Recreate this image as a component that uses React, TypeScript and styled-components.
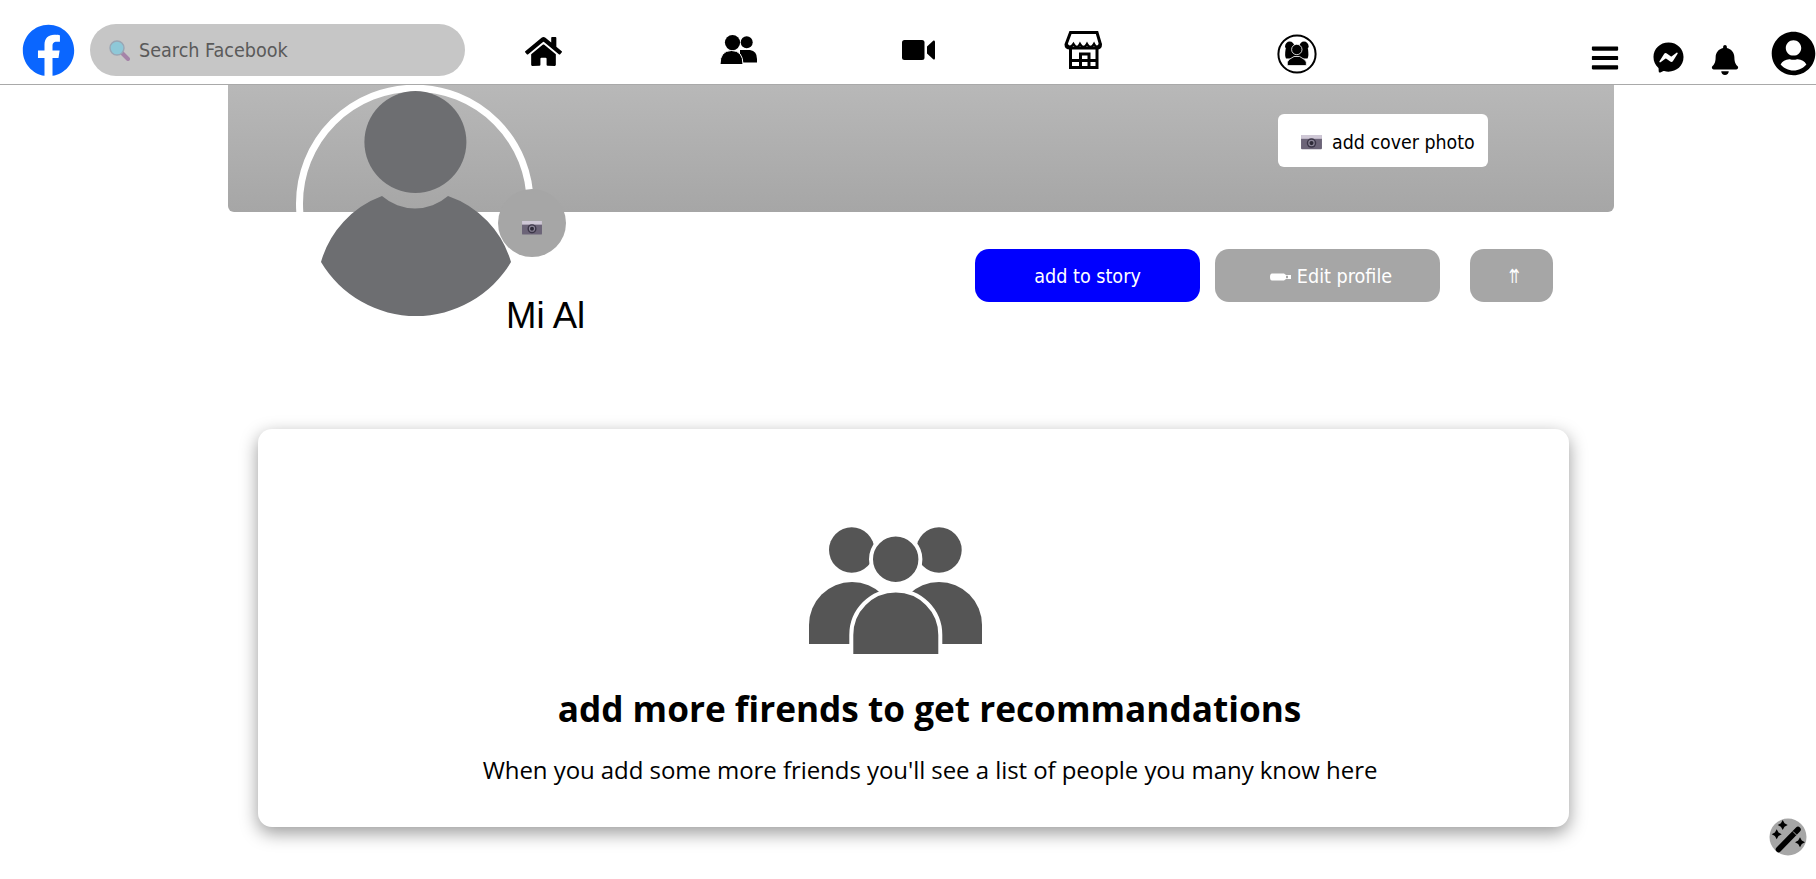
import React from 'react';
import styled, {createGlobalStyle} from 'styled-components';
import {FaBars, FaBell, FaFacebook, FaFacebookMessenger, FaHome, FaUserCircle} from 'react-icons/fa';

const GlobalStyle = createGlobalStyle`
    html, body {
        margin: 0;
        padding: 0;
        background: #fff;
    }
    body {
        font-family: "Open Sans", sans-serif;
        color: #000;
    }
`;

const uiFont = `"DejaVu Sans Condensed", "DejaVu Sans", sans-serif`;

const CameraGlyph = ({width}: {width: number}) => (
    <svg width={width} height={width * 0.68} viewBox="0 0 22 15">
        <rect x="0" y="0" width="22" height="15" rx="1" fill="#6c6478"/>
        <rect x="0" y="0" width="22" height="4" fill="#cfc8d6"/>
        <circle cx="11" cy="8.5" r="5" fill="#3c3648"/>
        <circle cx="11" cy="8.5" r="3.4" fill="#8d8799"/>
        <circle cx="11" cy="8.5" r="2.2" fill="#2e2a38"/>
    </svg>
);

const SearchGlyph = () => (
    <svg width="21" height="21" viewBox="0 0 21 21">
        <path d="M13 13 L19 19" stroke="#a583a8" strokeWidth="4" strokeLinecap="round"/>
        <circle cx="8" cy="8" r="7" fill="#8ec8d8" stroke="#9aa6b4" strokeWidth="1.4"/>
    </svg>
);

const PencilGlyph = () => (
    <svg width="21" height="8" viewBox="0 0 21 8">
        <path d="M2 0.5 H14 L16 2 H21 V6 H16 L14 7.5 H2 Q0 7.5 0 4 Q0 0.5 2 0.5 Z" fill="#fff"/>
        <rect x="16" y="2.8" width="2" height="2.4" fill="#a6a6a6"/>
    </svg>
);

const FriendsIcon = () => (
    <svg width="37" height="30" viewBox="0 0 37 30">
        <circle cx="26.7" cy="7.3" r="6"/>
        <path d="M20 27.5 V15 H30 Q37 16 37 24 V27.5 Z"/>
        <circle cx="12.5" cy="7.6" r="7.6"/>
        <path d="M0 29.5 Q0 15.5 11.5 15.5 Q23 15.5 23 29.5 Z" stroke="#fff" strokeWidth="1"/>
    </svg>
);

const VideoIcon = () => (
    <svg width="33" height="20" viewBox="0 0 33 20">
        <rect x="0" y="0" width="22.5" height="20" rx="2.5"/>
        <path d="M25 6.5 L31.5 0.6 Q33 0 33 2 V18 Q33 20 31.5 19.4 L25 13.5 Z"/>
    </svg>
);

const StoreIcon = () => (
    <svg width="38" height="38" viewBox="0 0 38 38" fill="none" stroke="#000" strokeWidth="3">
        <path d="M6.5 1.5 H33 L36.5 13.5 Q36.5 17 33 17 H6 Q2 17 2 13.5 Z"/>
        <path d="M2 12 Q5.5 19 9.5 13 Q13 19 16 13 Q19.5 19 23 13 Q26.5 19 30 13 Q33 19 36.5 12" strokeWidth="2.4"/>
        <path d="M6.5 17 V36.5 H33 V17"/>
        <path d="M6.5 29.5 H33"/>
        <path d="M16.5 36.5 V23 H25 V36.5"/>
    </svg>
);

const GroupCircleIcon = () => (
    <svg width="40" height="40" viewBox="0 0 40 40">
        <circle cx="20" cy="20" r="18.6" fill="#fff" stroke="#000" strokeWidth="2"/>
        <circle cx="12.7" cy="12.2" r="4.6"/>
        <circle cx="27" cy="12.2" r="4.6"/>
        <path d="M8.6 15 Q7.5 22 9 24.5 L30.5 24.5 Q32 22 31 15 Z"/>
        <circle cx="19.8" cy="15.5" r="5.2" stroke="#fff" strokeWidth="0.8"/>
        <path d="M10.3 31.6 V28 Q11 25.5 17 22.5 H22.6 Q28.6 25.5 29.3 28 V31.6 Z" stroke="#fff" strokeWidth="0.8"/>
    </svg>
);

const WandIcon = () => (
    <svg width="38" height="38" viewBox="0 0 38 38">
        <circle cx="19" cy="19" r="18.5" fill="#a6a6a6"/>
        <path d="M9.5 31.5 L29 11.5" stroke="#000" strokeWidth="5.5" strokeLinecap="round"/>
        <path d="M24 13.5 L27.5 17" stroke="#a6a6a6" strokeWidth="1"/>
        <path d="M13.7 2 L15.5 5.2 L18.7 7 L15.5 8.8 L13.7 12 L11.9 8.8 L8.7 7 L11.9 5.2 Z"/>
        <path d="M7.7 11.3 L9.5 14.5 L12.7 16.3 L9.5 18.1 L7.7 21.3 L5.9 18.1 L2.7 16.3 L5.9 14.5 Z"/>
        <path d="M31 19.3 L32.8 22.5 L36 24.3 L32.8 26.1 L31 29.3 L29.2 26.1 L26 24.3 L29.2 22.5 Z"/>
    </svg>
);

const PeopleIcon = () => (
    <svg width="173" height="127" viewBox="0 0 173 127" fill="#555">
        <circle cx="42.7" cy="23" r="22.7"/>
        <circle cx="130" cy="23" r="22.7"/>
        <path d="M0 117 V98 A43 43 0 0 1 86 98 V117 Z"/>
        <path d="M87 117 V98 A43 43 0 0 1 173 98 V117 Z"/>
        <circle cx="86.7" cy="32.3" r="24.7" stroke="#fff" strokeWidth="4"/>
        <path d="M42.3 129 V108 A44.5 44.5 0 0 1 131.3 108 V129 Z" stroke="#fff" strokeWidth="4"/>
    </svg>
);

const AvatarArt = () => (
    <svg width="240" height="235" viewBox="0 0 240 235">
        <defs>
            <clipPath id="coverClip">
                <rect x="0" y="0" width="240" height="127"/>
            </clipPath>
        </defs>
        <circle cx="118.8" cy="118.5" r="115.3" fill="none" stroke="#fff" strokeWidth="7" clipPath="url(#coverClip)"/>
        <circle cx="119.4" cy="57" r="51" fill="#6d6e71"/>
        <path d="M86 111 A50 50 0 0 0 152 111 A99 99 0 0 1 215 177 A110.5 110.5 0 0 1 25 177 A99 99 0 0 1 86 111 Z" fill="#6d6e71"/>
    </svg>
);

export default function App() {
    return (
        <Page>
            <GlobalStyle/>
            <Header>
                <Slot $left={0} $top={0}><FaFacebook size={53} color="#0a66ff"/></Slot>
                <Search>
                    <SearchGlyph/>
                    <span>Search Facebook</span>
                </Search>
                <Slot $left={60} $top={9}><FaHome size={37}/></Slot>
                <Slot $left={158} $top={11}><FriendsIcon/></Slot>
                <Slot $left={145} $top={16}><VideoIcon/></Slot>
                <Slot $left={129} $top={7}><StoreIcon/></Slot>
                <Slot $left={175} $top={10}><GroupCircleIcon/></Slot>
                <Slot $left={273} $top={19}><FaBars size={30}/></Slot>
                <Slot $left={33} $top={18}><FaFacebookMessenger size={31}/></Slot>
                <Slot $left={26} $top={21}><FaBell size={30}/></Slot>
                <Slot $left={31} $top={7}><FaUserCircle size={45}/></Slot>
            </Header>

            <Profile>
                <Cover>
                    <CoverButton>
                        <CameraGlyph width={21}/>
                        <span>add cover photo</span>
                    </CoverButton>
                </Cover>
                <AvatarHolder><AvatarArt/></AvatarHolder>
                <AvatarCamera><CameraGlyph width={20}/></AvatarCamera>
                <ProfileRow>
                    <Name>Mi Al</Name>
                    <Actions>
                        <ActionButton $bg="#0000ff" $width={225}>add to story</ActionButton>
                        <ActionButton $bg="#a6a6a6" $width={225} $shift={7}><PencilGlyph/> Edit profile</ActionButton>
                        <ActionButton $bg="#a6a6a6" $width={83} $gap={30} $shift={6}><ShareArrows>⇈</ShareArrows></ActionButton>
                    </Actions>
                </ProfileRow>
            </Profile>

            <Card>
                <CardIcon><PeopleIcon/></CardIcon>
                <CardTitle>add more firends to get recommandations</CardTitle>
                <CardText>When you add some more friends you'll see a list of people you many know here</CardText>
            </Card>

            <FloatingWand><WandIcon/></FloatingWand>
        </Page>
    );
}

const Page = styled.div`
    box-sizing: border-box;
    height: 879px;
    overflow: hidden;
`;

const Header = styled.header`
    display: flex;
    align-items: flex-start;
    box-sizing: border-box;
    height: 85px;
    padding: 24px 0 0 22px;
    border-bottom: 1px solid #a9a9a9;
    background: #fff;
`;

const Slot = styled.div<{$left: number; $top: number}>`
    display: flex;
    flex: none;
    margin-left: ${p => p.$left}px;
    margin-top: ${p => p.$top}px;
`;

const Search = styled.div`
    display: flex;
    align-items: center;
    gap: 9px;
    box-sizing: border-box;
    width: 375px;
    height: 52px;
    margin-left: 15px;
    padding-left: 19px;
    border-radius: 26px;
    background: #c6c6c6;
    font-family: ${uiFont};
    font-size: 19.6px;
    color: #5a5a5a;
`;

const Profile = styled.section`
    position: relative;
    width: 1386px;
    margin-left: 228px;
`;

const Cover = styled.div`
    display: flex;
    justify-content: flex-end;
    align-items: flex-start;
    box-sizing: border-box;
    height: 127px;
    padding: 29px 126px 0 0;
    border-radius: 0 0 6px 6px;
    background: linear-gradient(#b8b8b8, #a6a6a6);
`;

const CoverButton = styled.button`
    display: flex;
    align-items: center;
    gap: 10px;
    box-sizing: border-box;
    width: 210px;
    height: 53px;
    padding: 4px 0 0 23px;
    border: none;
    border-radius: 6px;
    background: #fff;
    font-family: ${uiFont};
    font-size: 19.4px;
    color: #000;
`;

const AvatarHolder = styled.div`
    position: absolute;
    left: 68px;
    top: 0;
    display: flex;
`;

const AvatarCamera = styled.div`
    position: absolute;
    left: 270px;
    top: 104px;
    display: flex;
    align-items: center;
    justify-content: center;
    box-sizing: border-box;
    width: 68px;
    height: 68px;
    padding-top: 10px;
    border-radius: 50%;
    background: #a6a6a6;
`;

const ProfileRow = styled.div`
    display: flex;
    align-items: flex-start;
    padding: 37px 61px 0 278px;
`;

const Name = styled.h1`
    margin: 46px 0 0;
    font-family: "Liberation Sans", Arial, sans-serif;
    font-size: 36.5px;
    font-weight: 400;
    line-height: 42px;
`;

const Actions = styled.div`
    display: flex;
    margin-left: auto;
    gap: 15px;
`;

const ActionButton = styled.button<{$bg: string; $width: number; $gap?: number; $shift?: number}>`
    display: flex;
    align-items: center;
    justify-content: center;
    gap: 6px;
    box-sizing: border-box;
    width: ${p => p.$width}px;
    height: 53px;
    margin-left: ${p => (p.$gap ?? 15) - 15}px;
    padding: 2px 0 0 ${p => p.$shift ?? 0}px;
    border: none;
    border-radius: 14px;
    background: ${p => p.$bg};
    font-family: ${uiFont};
    font-size: 19.6px;
    color: #fff;
`;

const ShareArrows = styled.span`
    display: inline-block;
    transform: scaleX(0.75);
`;

const Card = styled.section`
    display: flex;
    flex-direction: column;
    align-items: center;
    box-sizing: border-box;
    width: 1311px;
    height: 398px;
    margin: 92px 0 0 258px;
    padding-top: 98px;
    border-radius: 14px;
    background: #fff;
    box-shadow: 0 6px 18px rgba(0, 0, 0, 0.4);
`;

const CardIcon = styled.div`
    display: flex;
    margin-right: 36px;
`;

const CardTitle = styled.h2`
    margin: 32px 0 0 32px;
    font-size: 35.2px;
    font-weight: 700;
    line-height: 44px;
`;

const CardText = styled.p`
    margin: 24px 0 0 33px;
    font-size: 24px;
    font-weight: 400;
    line-height: 32px;
    letter-spacing: -0.06px;
`;

const FloatingWand = styled.div`
    position: fixed;
    left: 1769px;
    top: 818px;
    display: flex;
`;
